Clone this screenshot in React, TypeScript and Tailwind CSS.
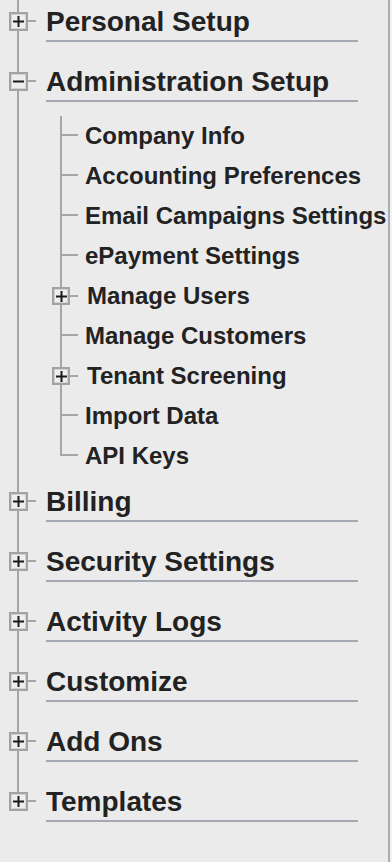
import React from "react";

function Box({ minus = false, size = 19 }: { minus?: boolean; size?: number }) {
  return (
    <div
      className={`relative z-10 shrink-0 ${size === 19 ? "w-[19px] h-[19px]" : "w-[18px] h-[18px]"} border-2 border-[#a3a3a3] bg-[#eeeeee] shadow-[inset_0_0_0_1px_#d2d2d2] flex items-center justify-center`}
    >
      <svg width="11" height="11" viewBox="0 0 11 11">
        <rect x="0" y="4.5" width="11" height="2" fill="#1b1b1b" />
        {!minus && <rect x="4.5" y="0" width="2" height="11" fill="#1b1b1b" />}
      </svg>
    </div>
  );
}

type Child = { label: string; box?: boolean };

const adminChildren: Child[] = [
  { label: "Company Info" },
  { label: "Accounting Preferences" },
  { label: "Email Campaigns Settings" },
  { label: "ePayment Settings" },
  { label: "Manage Users", box: true },
  { label: "Manage Customers" },
  { label: "Tenant Screening", box: true },
  { label: "Import Data" },
  { label: "API Keys" },
];

function ChildRow({ c }: { c: Child }) {
  if (c.box) {
    return (
      <div className="flex items-center h-[40px] pl-[52px]">
        <Box size={18} />
        <div className="w-[8px] h-[2px] bg-[#a6a6a6]" />
        <span className="ml-[9px] text-[24px] leading-[28px] font-bold text-[#222222] whitespace-nowrap">
          {c.label}
        </span>
      </div>
    );
  }
  return (
    <div className="flex items-center h-[40px] pl-[62px]">
      <div className="w-[16px] h-[2px] bg-[#a6a6a6] mt-[-2px]" />
      <span className="ml-[7px] text-[24px] leading-[28px] font-bold text-[#222222] whitespace-nowrap">
        {c.label}
      </span>
    </div>
  );
}

function TopItem({
  label,
  expanded = false,
  last = false,
  children,
}: {
  label: string;
  expanded?: boolean;
  last?: boolean;
  children?: Child[];
}) {
  return (
    <div className={`relative ${expanded ? "" : "pb-[18px]"}`}>
      <div
        className={`absolute left-[17px] top-0 w-[2px] bg-[#a6a6a6] ${last ? "h-[21px]" : "bottom-0"}`}
      />
      <div className="flex h-[42px]">
        <div className="w-[46px] shrink-0 flex items-start pt-[12px] pl-[9px]">
          <Box minus={expanded} />
          <div className="w-[8px] h-[2px] mt-[8px] bg-[#a6a6a6]" />
        </div>
        <div className="w-[312px] h-[42px] border-b-2 border-[#a4a9b3] pt-[6px]">
          <span className="text-[28px] leading-[32px] font-bold text-[#222222] whitespace-nowrap">
            {label}
          </span>
        </div>
      </div>
      {expanded && children && (
        <div className="relative pt-[14px] pb-[4px]">
          <div className="absolute left-[60px] top-[14px] h-[340px] w-[2px] bg-[#a6a6a6]" />
          {children.map((c) => (
            <ChildRow key={c.label} c={c} />
          ))}
        </div>
      )}
    </div>
  );
}

export default function App() {
  return (
    <div
      className="flex w-[392px] h-[862px] bg-[#ebebeb] overflow-hidden"
      style={{ fontFamily: '"Liberation Sans", Arial, Helvetica, sans-serif' }}
    >
      <div className="w-[390px] h-full border-r-2 border-[#a9aeb6]">
        <TopItem label="Personal Setup" />
        <TopItem label="Administration Setup" expanded children={adminChildren} />
        <TopItem label="Billing" />
        <TopItem label="Security Settings" />
        <TopItem label="Activity Logs" />
        <TopItem label="Customize" />
        <TopItem label="Add Ons" />
        <TopItem label="Templates" last />
      </div>
      <div className="w-[2px] h-full bg-[#f3f3f3]" />
    </div>
  );
}
